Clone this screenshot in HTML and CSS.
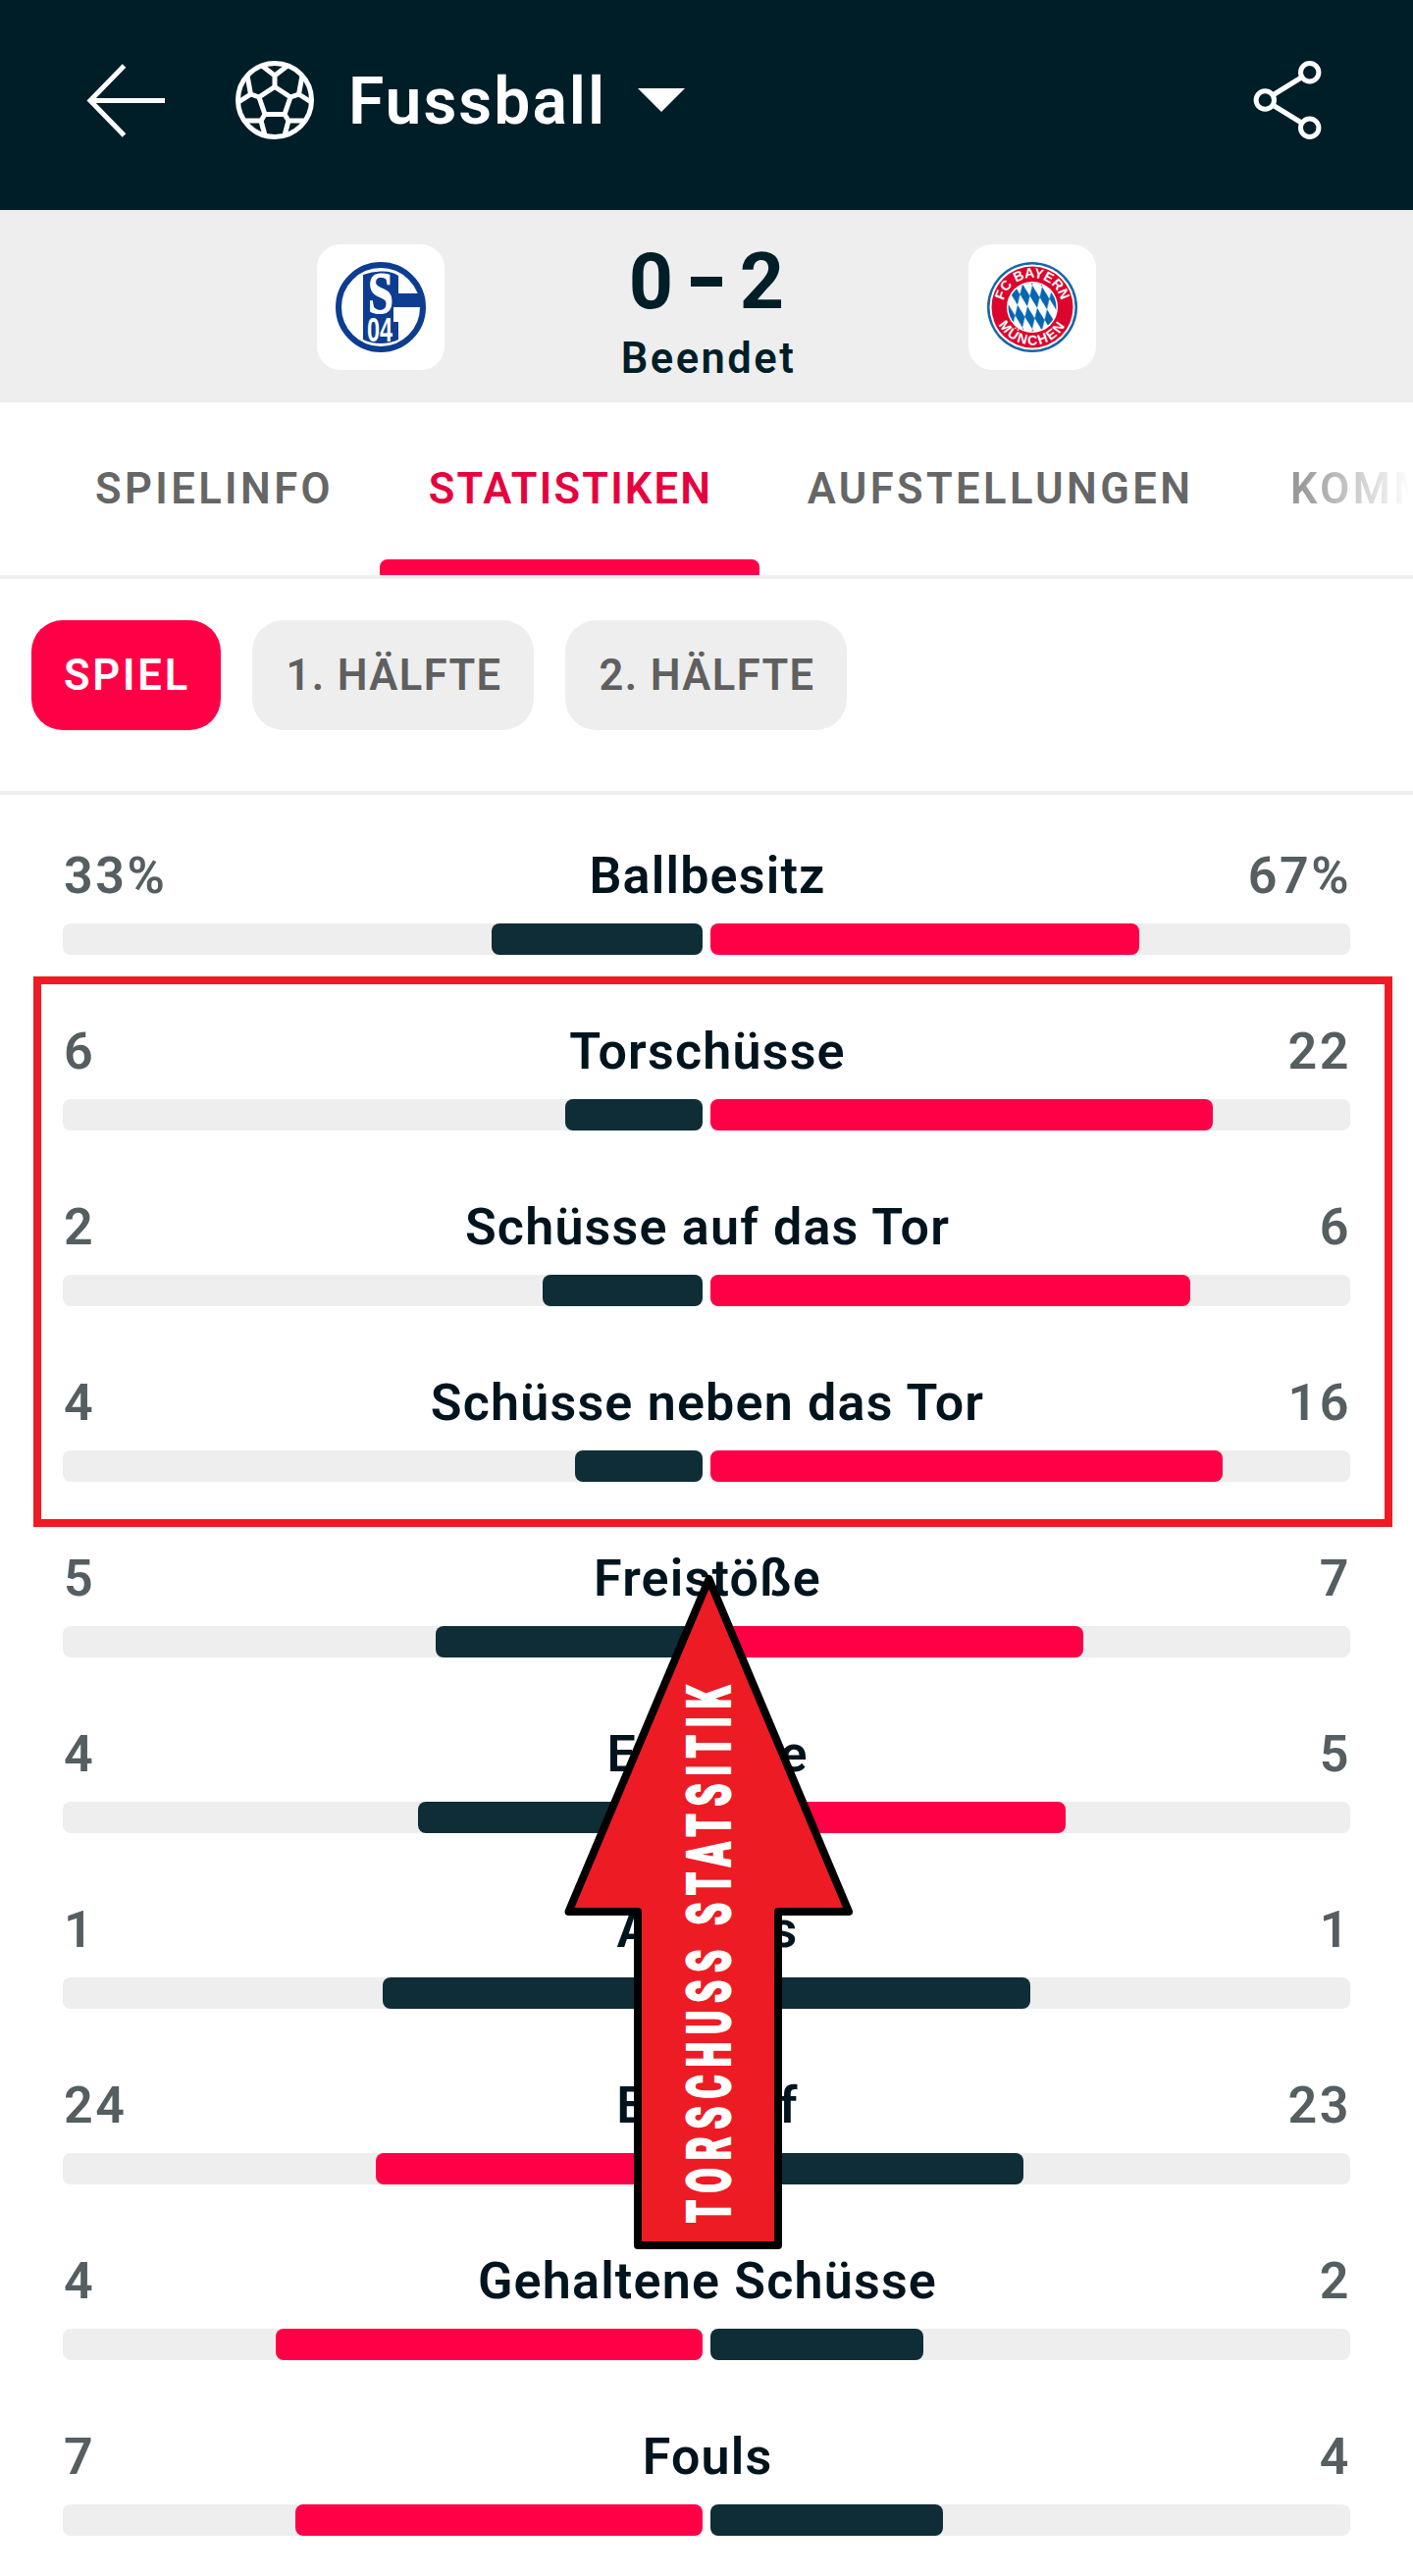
FILE: index.html
```html
<!DOCTYPE html>
<html lang="de">
<head>
    <meta charset="UTF-8">
    <meta name="viewport" content="width=device-width, initial-scale=1.0">
    <title>Fussball - Statistiken</title>
    <link rel="stylesheet" href="styles.css">
</head>
<body>
    <div class="header">
        <a class="back" href="#">
            <svg width="82" height="76" viewBox="0 0 82 76"><path d="M81 38.500H5M39.500 3L5 38.500L39.500 74" fill="none" stroke="#fff" stroke-width="5"/></svg>
        </a>
        <svg class="ball" width="80" height="80" viewBox="240 62 80 80" fill="none" stroke="#fff" stroke-width="5">
            <circle cx="280" cy="102" r="37.500"/>
            <path d="M280 88.500L296 99L290 116.500H270L264 99Z"/>
            <path d="M280 88.500V77L267 67M280 77L293 67"/>
            <path d="M264 99L255.500 96L252 77M255.500 96L243 104"/>
            <path d="M296 99L304.500 96L308 77M304.500 96L317 104"/>
            <path d="M270 116.500L266 123H248M266 123L270 138"/>
            <path d="M290 116.500L294 123H312M294 123L290 138"/>
        </svg>
        <h1>Fussball</h1>
        <span class="caret"></span>
        <a class="share" href="#">
            <svg width="70" height="80" viewBox="1277 62 70 80" fill="none" stroke="#fff" stroke-width="5">
                <circle cx="1334.700" cy="73.700" r="9.200"/>
                <circle cx="1289.300" cy="102" r="9.200"/>
                <circle cx="1334.700" cy="130.300" r="9.200"/>
                <path d="M1297 97L1327 78.500M1297 107L1327 125.500"/>
            </svg>
        </a>
    </div>

    <div class="match">
        <div class="team">
            <svg width="92" height="92" viewBox="0 0 92 92">
                <circle cx="46" cy="46" r="43" fill="#fff" stroke="#0d3d91" stroke-width="6"/>
                <path d="M28 13Q38 9 48 9.500Q58 9.500 64 14V32H89V46H59V61H64V79Q56 83 46 83Q36 83 28 79Z" fill="#0d3d91"/>
                <text class="s04-s" x="33" y="52" textLength="26" lengthAdjust="spacingAndGlyphs">S</text>
                <text class="s04-nr" x="32" y="80.500" textLength="26" lengthAdjust="spacingAndGlyphs">04</text>
            </svg>
        </div>
        <div class="result">
            <div class="score"><span>0</span><span class="dash"></span><span>2</span></div>
            <div class="state">Beendet</div>
        </div>
        <div class="team">
            <svg width="92" height="92" viewBox="0 0 92 92">
                <defs>
                    <pattern id="rauten" width="10" height="10" patternUnits="userSpaceOnUse" patternTransform="matrix(1 .15 .5 2.300 46 46)">
                        <path d="M5 0L10 5L5 10L0 5Z" fill="#0566b0"/>
                    </pattern>
                    <path id="oben" d="M16 46A30 30 0 0 1 76 46"/>
                    <path id="unten" d="M7.500 46A38.500 38.500 0 0 0 84.500 46"/>
                </defs>
                <circle cx="46" cy="46" r="46" fill="#1565a8"/>
                <circle cx="46" cy="46" r="43.500" fill="#fff"/>
                <circle cx="46" cy="46" r="41.500" fill="#dc052d"/>
                <circle cx="46" cy="46" r="26" fill="#fff"/>
                <circle cx="46" cy="46" r="24.500" fill="url(#rauten)"/>
                <text class="fcb"><textPath href="#oben" startOffset="50%" text-anchor="middle">FC BAYERN</textPath></text>
                <text class="fcb wide"><textPath href="#unten" startOffset="50%" text-anchor="middle">MÜNCHEN</textPath></text>
            </svg>
        </div>
    </div>

    <div class="tabs">
        <a class="tab tab-info" href="#">SPIELINFO</a>
        <a class="tab tab-stat active" href="#">STATISTIKEN</a>
        <a class="tab tab-team" href="#">AUFSTELLUNGEN</a>
        <a class="tab tab-komm" href="#">KOMMENTAR</a>
    </div>

    <div class="periods">
        <a class="pill pill-all active" href="#">SPIEL</a>
        <a class="pill" href="#">1. HÄLFTE</a>
        <a class="pill" href="#">2. HÄLFTE</a>
    </div>

    <div class="stats">
        <div class="stat">
            <div class="text"><span>33%</span><b>Ballbesitz</b><span>67%</span></div>
            <div class="bars"><div class="bar home"><i style="width:33%"></i></div><div class="bar"><i class="win" style="width:67%"></i></div></div>
        </div>
        <div class="marked">
            <div class="stat">
                <div class="text"><span>6</span><b>Torschüsse</b><span>22</span></div>
                <div class="bars"><div class="bar home"><i style="width:21.4%"></i></div><div class="bar"><i class="win" style="width:78.6%"></i></div></div>
            </div>
            <div class="stat">
                <div class="text"><span>2</span><b>Schüsse auf das Tor</b><span>6</span></div>
                <div class="bars"><div class="bar home"><i style="width:25%"></i></div><div class="bar"><i class="win" style="width:75%"></i></div></div>
            </div>
            <div class="stat">
                <div class="text"><span>4</span><b>Schüsse neben das Tor</b><span>16</span></div>
                <div class="bars"><div class="bar home"><i style="width:20%"></i></div><div class="bar"><i class="win" style="width:80%"></i></div></div>
            </div>
        </div>
        <div class="stat">
            <div class="text"><span>5</span><b>Freistöße</b><span>7</span></div>
            <div class="bars"><div class="bar home"><i style="width:41.7%"></i></div><div class="bar"><i class="win" style="width:58.3%"></i></div></div>
        </div>
        <div class="stat">
            <div class="text"><span>4</span><b>Eckbälle</b><span>5</span></div>
            <div class="bars"><div class="bar home"><i style="width:44.5%"></i></div><div class="bar"><i class="win" style="width:55.5%"></i></div></div>
        </div>
        <div class="stat">
            <div class="text"><span>1</span><b>Abseits</b><span>1</span></div>
            <div class="bars"><div class="bar home"><i style="width:50%"></i></div><div class="bar"><i style="width:50%"></i></div></div>
        </div>
        <div class="stat">
            <div class="text"><span>24</span><b>Einwurf</b><span>23</span></div>
            <div class="bars"><div class="bar home"><i class="win" style="width:51%"></i></div><div class="bar"><i style="width:49%"></i></div></div>
        </div>
        <div class="stat">
            <div class="text"><span>4</span><b>Gehaltene Schüsse</b><span>2</span></div>
            <div class="bars"><div class="bar home"><i class="win" style="width:66.7%"></i></div><div class="bar"><i style="width:33.3%"></i></div></div>
        </div>
        <div class="stat">
            <div class="text"><span>7</span><b>Fouls</b><span>4</span></div>
            <div class="bars"><div class="bar home"><i class="win" style="width:63.6%"></i></div><div class="bar"><i style="width:36.4%"></i></div></div>
        </div>

        <!-- Pfeil auf die Torschüsse -->
        <svg class="arrow" width="300" height="700" viewBox="572 1600 300 700">
            <path d="M722.500 1609L865 1948H793V2288H650V1948H579.500Z" fill="#ed1c24" stroke="#000" stroke-width="8" stroke-linejoin="round"/>
            <text class="arrow-text" transform="translate(744 2265) rotate(-90) scale(.6 1)" textLength="912">TORSCHUSS STATSITIK</text>
        </svg>
    </div>
</body>
</html>
```
FILE: styles.css
```css
* {
    box-sizing: border-box;
}
body {
    margin: 0;
    width: 1440px;
    height: 2625px;
    overflow: hidden;
    background-color: #fff;
    font-family: Roboto, "Liberation Sans", sans-serif;
    color: #00141e;
}
a {
    text-decoration: none;
}
svg {
    display: block;
    overflow: visible;
}
.header {
    display: flex;
    align-items: center;
    height: 214px;
    padding: 0 93px 10px 87px;
    background-color: #001e28;
}
.ball {
    margin-left: 71px;
}
h1 {
    margin: 2px 0 0 35px;
    width: 261px;
    font-size: 66px;
    font-weight: 600;
    letter-spacing: 2px;
    color: #fff;
}
.caret {
    margin-left: 34px;
    border: 24px solid transparent;
    border-top-color: #fff;
    border-bottom: 0;
}
.share {
    margin-left: auto;
}
.match {
    display: flex;
    height: 196px;
    padding: 35px 323px;
    justify-content: space-between;
    background-color: #eee;
}
.team {
    display: flex;
    align-items: center;
    justify-content: center;
    width: 130px;
    height: 128px;
    border-radius: 24px;
    background-color: #fff;
}
.s04-s {
    font: bold 61px "Liberation Serif", serif;
    fill: #fff;
    stroke: #fff;
    stroke-width: 1px;
}
.s04-nr {
    font: bold 35px "Liberation Sans", sans-serif;
    fill: #fff;
}
.fcb {
    font: bold 14px "Liberation Sans", sans-serif;
    fill: #fff;
}
.fcb.wide {
    letter-spacing: 1.8px;
}
.result {
    width: 220px;
    padding-top: 2px;
    text-align: center;
    color: #001e28;
}
.score {
    display: flex;
    align-items: center;
    justify-content: center;
    height: 72px;
    line-height: 72px;
    font-size: 79px;
    font-weight: 700;
}
.score span {
    width: 57px;
}
.score .dash {
    width: 32px;
    height: 10px;
    margin: 0 12px;
    background-color: #001e28;
}
.state {
    margin-top: 18px;
    padding-left: 4px;
    line-height: 50px;
    font-size: 43.5px;
    font-weight: 600;
    letter-spacing: 2.5px;
}
.tabs {
    display: flex;
    height: 180px;
    padding-left: 48px;
    overflow: hidden;
    border-bottom: 4px solid #eee;
}
.tab {
    position: relative;
    flex: none;
    height: 176px;
    line-height: 178px;
    text-align: center;
    font-size: 43.5px;
    font-weight: 600;
    letter-spacing: 3.4px;
    color: #666;
}
.tab-info {
    width: 341px;
    margin-right: -2px;
}
.tab-stat {
    width: 387px;
}
.tab-team {
    width: 491px;
}
.tab-komm {
    padding-left: 50px;
    color: transparent;
    background: linear-gradient(to right, #999 60px, #fff 172px) text;
}
.tab.active {
    padding-left: 2px;
    color: #e6003e;
    letter-spacing: 2.2px;
}
.tab.active::after {
    content: "";
    position: absolute;
    left: 0;
    bottom: 0;
    width: 100%;
    height: 16px;
    border-radius: 8px 8px 0 0;
    background-color: #ff0046;
}
.periods {
    display: flex;
    gap: 32px;
    height: 220px;
    padding: 42px 32px;
    border-bottom: 4px solid #eee;
}
.pill {
    width: 287px;
    height: 112px;
    padding-left: 2px;
    line-height: 114px;
    border-radius: 32px;
    text-align: center;
    font-size: 43.5px;
    font-weight: 600;
    letter-spacing: 1.4px;
    color: #5f5f5f;
    background-color: #eee;
}
.pill-all {
    width: 193px;
    letter-spacing: 2.8px;
}
.pill.active {
    color: #fff;
    background-color: #ff0046;
}
.stats {
    position: relative;
    padding: 51px 64px 0;
}
.stats, .marked {
    display: flex;
    flex-direction: column;
    gap: 67px;
}
.marked {
    position: relative;
}
.marked::after {
    content: "";
    position: absolute;
    top: -45px;
    right: -43px;
    bottom: -46px;
    left: -30px;
    border: 8px solid #ed1c24;
}
.text {
    display: grid;
    grid-template-columns: 200px 1fr 200px;
    height: 60px;
    line-height: 63px;
    font-size: 52px;
    font-weight: 600;
}
.text b {
    padding-left: 2px;
    font-weight: 600;
    letter-spacing: 1.2px;
    text-align: center;
}
.text span {
    padding-left: 1px;
    letter-spacing: 2.5px;
    color: #555e61;
}
.text span:last-child {
    margin-right: -1px;
    text-align: right;
}
.bars {
    display: flex;
    gap: 8px;
    margin-top: 20px;
}
.bar {
    display: flex;
    flex: 1;
    height: 32px;
    border-radius: 8px;
    background-color: #eee;
}
.home {
    justify-content: flex-end;
}
.bar i {
    height: 32px;
    border-radius: 8px;
    background-color: #0f2d37;
}
.bar .win {
    background-color: #ff0046;
}
.arrow {
    position: absolute;
    left: 572px;
    top: 790px;
}
.arrow-text {
    font-size: 61px;
    font-weight: 900;
    fill: #fff;
    stroke: #fff;
    stroke-width: 2px;
}
```
